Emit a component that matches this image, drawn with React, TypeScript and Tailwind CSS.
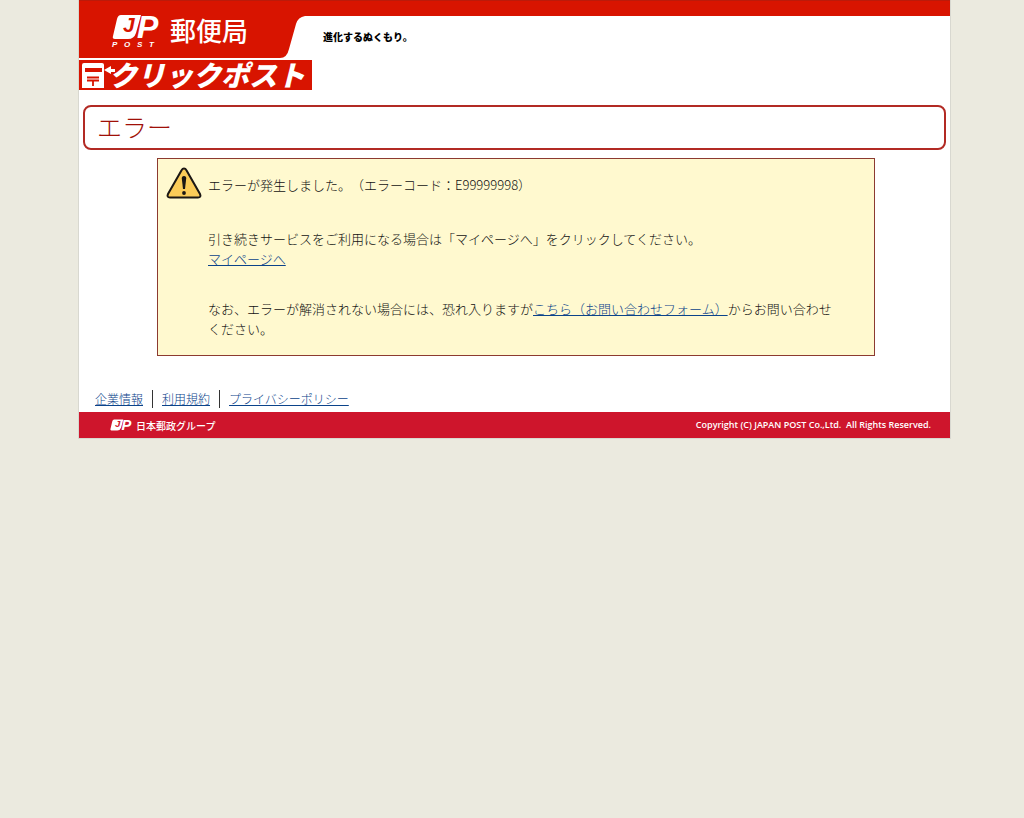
import type { ReactNode } from "react";

const footerLinks = ["企業情報", "利用規約", "プライバシーポリシー"];

function JpMark({ className, color }: { className: string; color: string }) {
    return (
        <svg viewBox="0 0 48 26" className={className} role="img" aria-label="JP">
            <path d="M9 1H29L24 19Q22 25 16 25H3Q0 25 1 22L5 5Q6 1 9 1Z" fill="#fff" />
            <g fontFamily="'Liberation Sans', sans-serif" fontWeight="700" fontStyle="italic">
                <text x="11" y="18" fontSize="21" fill={color}>
                    J
                </text>
                <text x="25" y="24" fontSize="32" fill="#fff">
                    P
                </text>
            </g>
        </svg>
    );
}

function PostboxIcon() {
    return (
        <svg viewBox="0 0 36 30" className="h-[30px] w-9 shrink-0" aria-hidden="true">
            <path d="M5 3H23Q25 3 25 5V28H3V5Q3 3 5 3Z" fill="#fff" />
            <path d="M6 8H23V12H6Z" fill="#d81400" />
            <path d="M25 10L32 6V9H36V12H32V14Z" fill="#fff" />
            <path d="M8 17.5H20M8 20.5H20M14 20V26" stroke="#d81400" strokeWidth="1.8" fill="none" />
        </svg>
    );
}

function WarningIcon() {
    return (
        <svg viewBox="0 0 36 32" className="h-8 w-9 shrink-0" aria-hidden="true">
            <path
                d="M18 1.5Q19.5 1.5 20.3 3L34 27Q35.5 30.5 32 30.5H4Q0.5 30.5 2 27L15.7 3Q16.5 1.5 18 1.5Z"
                fill="#fbcc58"
                stroke="#1b1714"
                strokeWidth="2"
            />
            <path d="M18 9Q20.4 9 20.2 11.5L19 22H17L15.8 11.5Q15.6 9 18 9Z" fill="#1b1714" />
            <circle cx="18" cy="26" r="1.9" fill="#1b1714" />
        </svg>
    );
}

function TextLink({ children }: { children: ReactNode }) {
    return (
        <a href="#" className="text-[#0b438a] underline">
            {children}
        </a>
    );
}

export default function App() {
    return (
        <div className="min-h-screen bg-[#ebeadf] pr-[74px] pl-[79px] font-['Noto_Sans_CJK_JP',sans-serif] text-[#111] [text-spacing-trim:space-all]">
            <div className="mx-auto max-w-[871px] bg-white ring-1 ring-[#d8d8d0]">
                <header>
                    <div className="h-4 border-t border-[#bb1a0a] bg-[#d81400]" />
                    <div className="flex h-[42px]">
                        <div className="relative w-[226px] shrink-0">
                            <svg viewBox="0 0 226 42" className="absolute inset-0 h-[42px] w-[226px]" aria-hidden="true">
                                <path d="M0 0H226Q219 1 217 8L210 33Q208 42 201 42H0Z" fill="#d81400" />
                            </svg>
                            <a href="#" className="relative flex pl-[33px] text-white">
                                <span className="w-12">
                                    <JpMark className="-mt-0.5 h-[26px] w-12 overflow-visible" color="#d81400" />
                                    <span className="flex justify-between pt-px pr-1.5 font-['Liberation_Sans',sans-serif] text-[8px] leading-2 font-bold italic">
                                        <span>P</span>
                                        <span>O</span>
                                        <span>S</span>
                                        <span>T</span>
                                    </span>
                                </span>
                                <span className="ml-2.5 text-[26px] leading-7 font-medium">郵便局</span>
                            </a>
                        </div>
                        <p className="pt-[13px] pl-[18px] text-[10px] leading-4 font-black text-black">進化するぬくもり。</p>
                    </div>
                    <a href="#" className="mt-0.5 flex h-[30px] w-[233px] items-start bg-[#d81400] text-white">
                        <PostboxIcon />
                        <span className="-ml-1.5 text-[28px] leading-7 font-black whitespace-nowrap italic">クリックポスト</span>
                    </a>
                </header>

                <main>
                    <h1 className="mx-1 mt-[15px] flex h-[45px] items-center rounded-lg border-2 border-[#b22a24] pb-1 pl-3 text-[25px] leading-8 font-light text-[#a01008]">
                        エラー
                    </h1>
                    <section className="mt-2 mr-[75px] ml-[78px] flex border border-[#8c3a30] bg-[#fff9cf] px-2 pt-2 pb-4 text-[13px] leading-5 font-light">
                        <WarningIcon />
                        <div className="ml-1.5 max-w-[636px] pt-2">
                            <p>エラーが発生しました。（エラーコード：E99999998）</p>
                            <p className="mt-[34px]">
                                引き続きサービスをご利用になる場合は「マイページへ」をクリックしてください。
                                <br />
                                <TextLink>マイページへ</TextLink>
                            </p>
                            <p className="mt-[30px]">
                                なお、エラーが解消されない場合には、恐れ入りますが
                                <TextLink>こちら（お問い合わせフォーム）</TextLink>
                                からお問い合わせください。
                            </p>
                        </div>
                    </section>
                </main>

                <footer className="mt-[34px]">
                    <ul className="flex pb-1 pl-[7px] text-xs leading-[18px] font-light">
                        {footerLinks.map((label) => (
                            <li key={label} className="border-l border-[#333] px-[9px] first:border-l-0">
                                <TextLink>{label}</TextLink>
                            </li>
                        ))}
                    </ul>
                    <div className="flex h-[26px] items-center justify-between bg-[#ce152c] pr-[19px] pl-[31px] text-white">
                        <div className="flex items-center gap-1">
                            <JpMark className="h-3 w-[22px] overflow-visible" color="#ce152c" />
                            <span className="text-[10px] font-medium">日本郵政グループ</span>
                        </div>
                        <small className="font-['Open_Sans',sans-serif] text-[9px] font-semibold whitespace-pre">
                            Copyright (C) JAPAN POST Co.,Ltd.  All Rights Reserved.
                        </small>
                    </div>
                </footer>
            </div>
        </div>
    );
}
